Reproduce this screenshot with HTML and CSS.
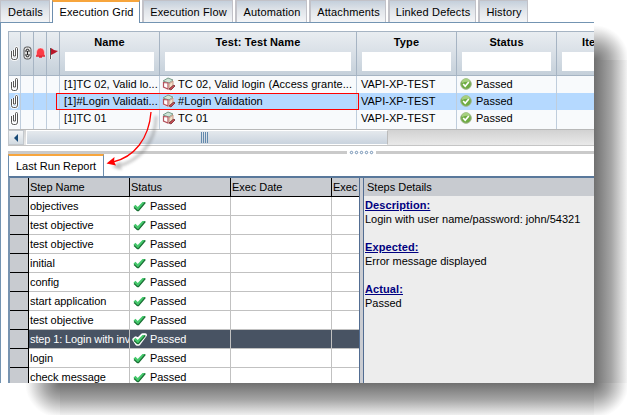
FILE: index.html
```html
<!DOCTYPE html>
<html lang="en">
<head>
<meta charset="utf-8">
<title>Execution Grid</title>
<link rel="stylesheet" href="styles.css">
</head>
<body>
<svg class="defs" width="0" height="0">
  <symbol id="clip" viewBox="0 0 9 16"><path d="M3.500 5v6h2V3.500Q5.500 2.500 6.500 2.500T7.500 3.500v8.500Q7.500 14.500 5.500 14.500H3.500Q1.500 14.500 1.500 12.500V6" fill="none" stroke="#fff" stroke-width="2.400"/><path d="M3.500 5v6h2V3.500Q5.500 2.500 6.500 2.500T7.500 3.500v8.500Q7.500 14.500 5.500 14.500H3.500Q1.500 14.500 1.500 12.500V6" fill="none" stroke="#444" stroke-width=".9"/></symbol>
  <symbol id="cube" viewBox="0 0 14 14"><path d="M1 4 5 1l6 1 1 4-2 6-4 1-5-2z" fill="#fff"/><path d="M1 4 6 1l5 2-4 3z" fill="#cfe5d7" stroke="#789b8b"/><path d="M1.500 5.500 6 6v6L1.500 10z" fill="#fff" stroke="#b5525d" stroke-width="1.200"/><path d="m7 7 4-3v4l-4 4z" fill="#f1dfca" stroke="#c59482"/><path d="m7 12 5-4 1 1-4 4z" fill="#d04b53" stroke="#702d35" stroke-width=".8"/></symbol>
  <symbol id="ok" viewBox="0 0 12 12"><circle cx="6" cy="6" r="5.300" fill="#6fac43" stroke="#a1b58f"/><path d="M2 5a4 4 0 0 1 8-1Q6 3 2 5" fill="#a6d080"/><path d="m3.200 6 2 2.200L8.800 4" fill="none" stroke="#fff" stroke-width="1.700"/></symbol>
  <symbol id="tick" viewBox="0 0 15 13"><path class="halo" d="M2 6.500 3.700 5 5.700 7 10.500 2H13.300L6.700 11H5z"/><path d="M1.500 6.500 3.500 4.800 5.700 7 10.500 2H13.500L6.500 11H5z" fill="#45c96c"/><path d="m2 7.500 3.500 3.200h1L13.300 2.500" fill="none" stroke="#1b6e35" stroke-width="1.200"/></symbol>
</svg>
<div class="stage">
  <main class="window">
    <nav class="tabs">
      <span class="tab details">Details</span><span class="tab active grid-tab">Execution Grid</span><span class="tab flow">Execution Flow</span><span class="tab auto">Automation</span><span class="tab attach">Attachments</span><span class="tab linked">Linked Defects</span><span class="tab history">History</span>
    </nav>
    <div class="content">
      <section class="tests">
        <div class="test-row test-head">
          <div class="ico"><svg class="clip"><use href="#clip"/></svg></div>
          <div class="ico"><svg width="9" height="14" viewBox="0 0 9 14"><rect x="1" y="1" width="7" height="12" rx="2.500" fill="#ddd" stroke="#555"/><path d="M3 6V4q1.500-1.500 3 0v2M3 8v2q1.500 1.500 3 0V8M4.500 5v4" fill="none" stroke="#222" stroke-width="1"/></svg></div>
          <div class="ico"><svg width="11" height="12" viewBox="0 0 11 12"><path d="M1 9 1.500 7V5Q2 1 5.500 1T9.500 5v2l.5 2z" fill="#fb3b45" stroke="#fff" stroke-width=".4"/><path d="M1 9h9M4 10h3" stroke="#e12632" stroke-width="1.500"/></svg></div>
          <div class="ico"><svg width="11" height="13" viewBox="0 0 11 13"><path d="M2.500 1v11" stroke="#fff" stroke-width="3"/><path d="M2.500 1v11" stroke="#555" stroke-width="1.200"/><path d="m3 1 3 2 4 1-3 2-4 2z" fill="#b91528"/></svg></div>
          <div class="hc"><b>Name</b><i></i></div><div class="hc"><b>Test: Test Name</b><i></i></div><div class="hc"><b>Type</b><i></i></div><div class="hc"><b>Status</b><i></i></div><div class="hc item"><b>Ite</b><i></i></div>
        </div>
        <div class="test-row">
          <div class="ico"><svg class="clip"><use href="#clip"/></svg></div><div></div><div></div><div></div>
          <div class="nm">[1]TC 02, Valid lo...</div><div class="tn"><svg><use href="#cube"/></svg><span>TC 02, Valid login (Access grante...</span></div><div class="ty">VAPI-XP-TEST</div><div class="st"><svg><use href="#ok"/></svg>Passed</div><div></div>
        </div>
        <div class="test-row selected">
          <div class="ico"><svg class="clip"><use href="#clip"/></svg></div><div></div><div></div><div></div>
          <div class="nm val">[1]#Login Validati...</div><div class="tn"><svg><use href="#cube"/></svg><span>#Login Validation</span></div><div class="ty">VAPI-XP-TEST</div><div class="st"><svg><use href="#ok"/></svg>Passed</div><div></div>
        </div>
        <div class="test-row">
          <div class="ico"><svg class="clip"><use href="#clip"/></svg></div><div></div><div></div><div></div>
          <div class="nm">[1]TC 01</div><div class="tn"><svg><use href="#cube"/></svg><span>TC 01</span></div><div class="ty">VAPI-XP-TEST</div><div class="st"><svg><use href="#ok"/></svg>Passed</div><div></div>
        </div>
        <div class="test-row"><div class="ico"><svg class="clip"><use href="#clip"/></svg></div><div></div><div></div><div></div><div></div><div></div><div></div><div></div><div></div></div>
      </section>
      <div class="scroll"><span class="left"><svg width="6" height="8"><path d="M5 0v8L1 4z" fill="#164976"/></svg></span><span class="thumb"><em></em></span></div>
      <div class="splitter"><svg width="29" height="5" viewBox="0 0 29 5"><g fill="#fff" stroke="#6f8fb3"><circle cx="4.500" cy="2.500" r="1.200"/><circle cx="9.500" cy="2.500" r="1.200"/><circle cx="14.500" cy="2.500" r="1.200"/><circle cx="19.500" cy="2.500" r="1.200"/><circle cx="24.500" cy="2.500" r="1.200"/></g></svg></div>
      <div class="report-tabs"><span>Last Run Report</span></div>
      <div class="report">
        <section class="steps">
          <div class="step head"><div></div><div>Step Name</div><div>Status</div><div>Exec Date</div><div>Exec</div></div>
          <div class="step"><div></div><div>objectives</div><div><svg><use href="#tick"/></svg>Passed</div><div></div><div></div></div>
          <div class="step"><div></div><div>test objective</div><div><svg><use href="#tick"/></svg>Passed</div><div></div><div></div></div>
          <div class="step"><div></div><div>test objective</div><div><svg><use href="#tick"/></svg>Passed</div><div></div><div></div></div>
          <div class="step"><div></div><div>initial</div><div><svg><use href="#tick"/></svg>Passed</div><div></div><div></div></div>
          <div class="step"><div></div><div>config</div><div><svg><use href="#tick"/></svg>Passed</div><div></div><div></div></div>
          <div class="step"><div></div><div>start application</div><div><svg><use href="#tick"/></svg>Passed</div><div></div><div></div></div>
          <div class="step"><div></div><div>test objective</div><div><svg><use href="#tick"/></svg>Passed</div><div></div><div></div></div>
          <div class="step chosen"><div></div><div>step 1: Login with inv</div><div><svg><use href="#tick"/></svg>Passed</div><div></div><div></div></div>
          <div class="step"><div></div><div>login</div><div><svg><use href="#tick"/></svg>Passed</div><div></div><div></div></div>
          <div class="step"><div></div><div>check message</div><div><svg><use href="#tick"/></svg>Passed</div><div></div><div></div></div>
        </section>
        <div class="divider"></div>
        <aside>
          <h2>Steps Details</h2>
          <dl><dt>Description:</dt><dd>Login with user name/password: john/54321</dd><dt>Expected:</dt><dd>Error message displayed</dd><dt>Actual:</dt><dd>Passed</dd></dl>
        </aside>
      </div>
    </div>
    <div class="outline"></div>
    <svg class="arrow" width="80" height="70" viewBox="95 108 80 70">
      <defs><filter id="soft" x="-30%" y="-30%" width="160%" height="160%"><feGaussianBlur stdDeviation="1.500"/></filter></defs>
      <g filter="url(#soft)" opacity=".32" transform="translate(5 4)"><path d="M151 112C151 139 134 157 112 162.500" fill="none" stroke="#555" stroke-width="3"/><path d="m107 163 9-6-1 4 2 5z" fill="#333"/></g>
      <path d="M151 112C149 139 134 157 113 162" fill="none" stroke="#f00" stroke-width="1.300"/><path d="m106.500 163.500 8-6.500-.5 4.500 2 4z" fill="#f00"/>
    </svg>
  </main>
  <div class="shadow-right"></div>
  <div class="shadow-bottom"></div>
  <div class="shadow-corner"></div>
</div>
</body>
</html>
```
FILE: styles.css
```css
* { box-sizing: border-box; }
body { margin: 0; background: #fff; overflow: hidden; font: 11px/14px "Liberation Sans", Arial, sans-serif; color: #000; }
.defs { position: absolute; }
.stage { display: grid; grid-template: 383px 32px / 594px 33px; width: 627px; height: 415px; }
.window { position: relative; width: 594px; height: 383px; overflow: hidden; background: #fff; display: flex; flex-direction: column; }

.tabs { height: 23px; flex: none; display: flex; border-bottom: 1px solid #7394b2; }
.tab { height: 22px; border: 1px solid #c2c2c8; border-width: 1px 1px 0 2px; background: linear-gradient(#c4cfdb, #e1e5ea 45%, #f4f5f7); text-align: center; line-height: 22px; white-space: nowrap; margin-right: 2px; padding-left: 1px; letter-spacing: .14px; flex: none; }
.details { width: 50px; border-left-width: 1px; letter-spacing: .2px; }
.grid-tab { width: 88px; }
.flow { width: 91px; }
.auto { width: 72px; }
.attach { width: 77px; }
.linked { width: 88px; }
.history { width: 50px; }
.tab.active { height: 23px; background: #fff; border: 1px solid #6d8eae; border-bottom: 0; border-top: 2px solid #f7a53c; line-height: 20px; }

.content { flex: 1; min-height: 0; padding: 8px 0 0 7px; border-left: 1px solid #7394b2; }
.tests { height: 99px; overflow: hidden; border-top: 1px solid #a6b4c3; border-left: 1px solid #a6b4c3; border-bottom: 1px solid #b8b8b8; }
.test-row { display: grid; grid-template-columns: 12px 13px 13px 13px 100px 197px 100px 100px 100px; height: 17px; background: #f8fafc; line-height: 14px; }
.test-row > div { border-right: 1px solid #bfcddc; overflow: hidden; white-space: nowrap; display: flex; align-items: center; padding-bottom: 1px; }
.test-row.test-head { height: 44px; background: linear-gradient(#e9edf1, #d8dfe6 50%, #c5d0da); border-bottom: 1px solid #a6b4c3; }
.test-head > div { border-color: #a6b4c3; }
.ico { justify-content: center; }
.clip { width: 9px; height: 16px; flex: none; }
.test-row .hc { flex-direction: column; align-items: stretch; padding: 3px 5px 0; }
.hc b { text-align: center; line-height: 15px; letter-spacing: .1px; }
.hc i { background: #fff; height: 19px; margin-top: 2px; }
.item b { text-align: left; padding-left: 20px; }
.test-row.selected { background: #b5d9ff; }
.nm { padding-left: 4px; letter-spacing: .05px; }
.tn { padding-left: 2px; letter-spacing: .07px; }
.tn svg { width: 14px; height: 14px; margin-right: 2px; flex: none; }
.ty { padding-left: 4px; }
.st { padding-left: 3px; }
.st svg { width: 12px; height: 12px; margin-right: 4px; flex: none; }
.outline { position: absolute; left: 56px; top: 93px; width: 303px; height: 17px; border: 1px solid #f00; }
.arrow { position: absolute; left: 95px; top: 108px; }

.scroll { height: 16px; display: flex; background: linear-gradient(#d2d2d2, #e9e9e9); border-bottom: 1px solid #c5c5c5; }
.left { width: 16px; border: 1px solid #c2c7cc; background: linear-gradient(#f2f4f6, #d2dae1); display: flex; align-items: center; justify-content: center; }
.thumb { width: 362px; margin-left: 2px; border: 1px solid #fff; border-right-color: #bbb; background: linear-gradient(#e5e9ed, #c9d3de); display: flex; align-items: center; padding-left: 174px; }
.thumb em { width: 8px; height: 11px; background: repeating-linear-gradient(90deg, #6389ac 0 1px, transparent 1px 2px); }
.splitter { height: 3px; margin-top: 5px; background: #cacaca; display: flex; align-items: center; padding-left: 339px; }
.splitter svg { background: #fff; flex: none; }
.report-tabs { height: 22px; display: flex; }
.report-tabs span { width: 96px; height: 22px; line-height: 18px; padding: 1px 0 0 7px; border: 1px solid #6d8eae; border-top: 2px solid #f7a53c; border-bottom: 0; white-space: nowrap; }
.report { height: 207px; display: flex; border-top: 2px solid #59789b; border-left: 2px solid #7894b0; }
.steps { width: 349px; flex: none; overflow: hidden; }
.step { display: grid; grid-template-columns: 19px 101px 101px 101px 27px; height: 19px; line-height: 18px; }
.step > div { border-right: 1px solid #c1c1c1; border-bottom: 1px solid #c1c1c1; padding-left: 1px; overflow: hidden; white-space: nowrap; display: flex; align-items: center; letter-spacing: -.04px; }
.step > div:first-child { background: #c8cbd0; border-color: #000; }
.step > div:last-child { border-right: 0; }
.step svg { width: 15px; height: 13px; margin: 0 3px 0 1px; flex: none; overflow: visible; }
.step.head > div { background: #c8cbd0; border-color: #000; }
.chosen { color: #fff; --halo: #fff; }
.chosen > div:not(:first-child) { background: #485363; }
.step.chosen > div:nth-child(2) { letter-spacing: -.12px; }
.halo { fill: var(--halo, none); stroke: var(--halo, none); stroke-width: 3.4px; stroke-linejoin: round; }
.divider { width: 5px; flex: none; background: #cbcdd2; border: 1px solid #526d92; border-width: 0 1px; }
aside { flex: 1; background: #ededed; overflow: hidden; }
h2 { margin: 0; height: 18px; padding-left: 3px; background: #c8cbd0; font: 11px/18px "Liberation Sans", Arial, sans-serif; }
dl { margin: 0; padding: 2px 0 0 1px; }
dt { color: #000080; font-weight: bold; text-decoration: underline; letter-spacing: .1px; }
dd { margin: 0 0 14px; }

.shadow-right { grid-area: 1 / 2; margin-top: 24px; background: radial-gradient(circle 35px at 0 36px, #707070, #aaa 45%, #f3f3f3 90%, #fff) top / 100% 36px no-repeat, linear-gradient(90deg, #707070, #a5a5a5 52%, #f3f3f3) 0 36px / 100% 323px no-repeat; }
.shadow-bottom { grid-area: 2 / 1; margin-left: 24px; background: radial-gradient(circle 35px at 36px 0, #707070, #aaa 45%, #f3f3f3 90%, #fff) left / 36px 100% no-repeat, linear-gradient(#707070, #a5a5a5 52%, #f0f0f0) 36px 0 / 534px 100% no-repeat; }
.shadow-corner { grid-area: 2 / 2; background: radial-gradient(circle 35px at 0 0, #707070, #aaa 45%, #f3f3f3 90%, #fff); }
```
